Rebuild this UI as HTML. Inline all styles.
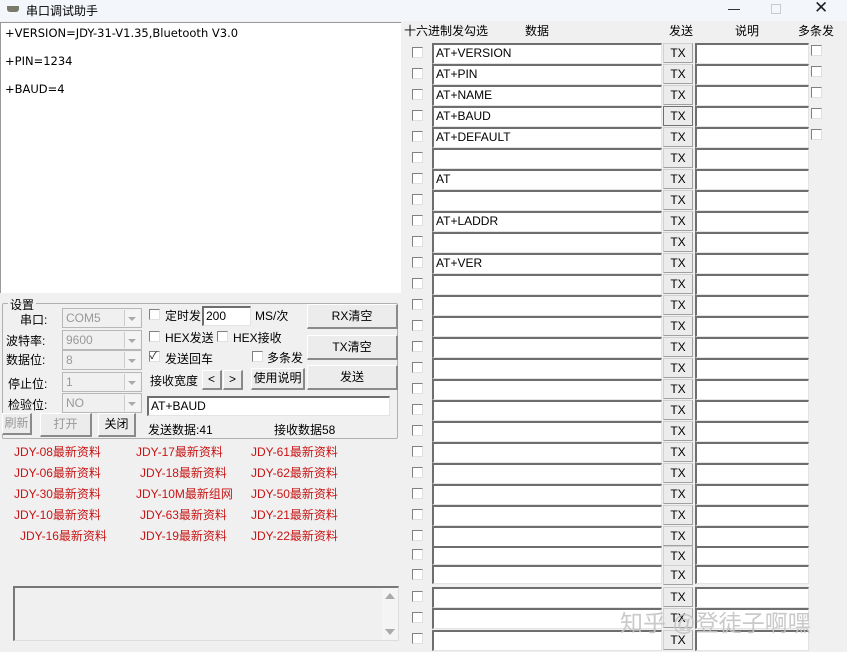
<!DOCTYPE html>
<html><head><meta charset="utf-8"><style>
*{box-sizing:border-box;margin:0;padding:0}
body{width:847px;height:652px;background:#f0f0f0;font-family:"Liberation Sans","Noto Sans CJK SC",sans-serif;font-size:12px;color:#000;position:relative;overflow:hidden}
.a{position:absolute;white-space:nowrap}
.title{left:0;top:0;width:847px;height:21px;background:#f3f6fa}
.inp{position:absolute;background:#fff;border-top:2px solid #6e6e6e;border-left:2px solid #6e6e6e;border-bottom:1px solid #e3e3e3;border-right:1px solid #e3e3e3;font-size:12px;padding-left:2px;line-height:17px;white-space:nowrap}
.tx{position:absolute;background:#ececec;border:1px solid #d0d0d0;border-right:1px solid #a0a0a0;border-bottom:1px solid #a0a0a0;text-align:center;font-size:12px;line-height:18px;width:30px;height:20px}
.cb{position:absolute;width:11px;height:11px;background:#fff;border-top:1px solid #808080;border-left:1px solid #808080;border-right:1px solid #e0e0e0;border-bottom:1px solid #e0e0e0}
.btn{position:absolute;background:#ececec;border:1px solid #fff;border-right:2px solid #8a8a8a;border-bottom:2px solid #8a8a8a;text-align:center;font-size:12px}
.sel{position:absolute;background:#f0f0f0;border:1px solid #b8b8b8;color:#999;font-size:12px;padding-left:3px;line-height:18px;height:20px;width:80px}
.sel:after{content:"";position:absolute;right:1px;top:1px;width:15px;height:16px;background:#f4f4f4;border-left:1px solid #ccc}
.sel i{position:absolute;right:5px;top:8px;border:4px solid transparent;border-top:4px solid #aaa;z-index:2}
.red{position:absolute;color:#c81414;font-size:12px;white-space:nowrap}
</style></head><body>
<div class="a title"></div>
<div class="a" style="left:7px;top:6px;width:12px;height:6px;background:#7a7a6a;border-radius:0 0 3px 3px"></div>
<div class="a" style="left:26px;top:2px;font-size:12px">串口调试助手</div>
<div class="a" style="left:728px;top:9px;width:12px;height:1px;background:#333"></div>
<div class="a" style="left:771px;top:4px;width:10px;height:10px;border:1px solid #ccc"></div>
<div class="a" style="left:814px;top:-2px;font-size:17px;color:#222">✕</div>

<div class="a" style="left:0;top:22px;width:401px;height:271px;background:#fff;border-top:1px solid #999;border-left:1px solid #999"></div>
<div class="a" style="left:5px;top:26px;font-family:'DejaVu Sans',sans-serif;font-size:11.5px">+VERSION=JDY-31-V1.35,Bluetooth V3.0</div>
<div class="a" style="left:5px;top:54px;font-family:'DejaVu Sans',sans-serif;font-size:11.5px">+PIN=1234</div>
<div class="a" style="left:5px;top:82px;font-family:'DejaVu Sans',sans-serif;font-size:11.5px">+BAUD=4</div>

<div class="a" style="left:2px;top:303px;width:396px;height:136px;border:1px solid #b0b0b0;border-radius:2px"></div>
<div class="a" style="left:8px;top:296px;background:#f0f0f0;padding:0 2px">设置</div>
<div class="a" style="left:20px;top:311px">串口:</div>
<div class="a" style="left:6px;top:332px">波特率:</div>
<div class="a" style="left:6px;top:351px">数据位:</div>
<div class="a" style="left:8px;top:375px">停止位:</div>
<div class="a" style="left:8px;top:396px">检验位:</div>
<div class="sel" style="left:62px;top:308px">COM5<i></i></div>
<div class="sel" style="left:62px;top:330px">9600<i></i></div>
<div class="sel" style="left:62px;top:350px">8<i></i></div>
<div class="sel" style="left:62px;top:372px">1<i></i></div>
<div class="sel" style="left:62px;top:393px">NO<i></i></div>
<div class="btn" style="left:2px;top:413px;width:30px;height:22px;color:#999;line-height:19px">刷新</div>
<div class="btn" style="left:40px;top:413px;width:52px;height:24px;color:#999;line-height:21px">打开</div>
<div class="btn" style="left:98px;top:413px;width:38px;height:24px;line-height:21px">关闭</div>

<div class="cb" style="left:149px;top:309px"></div><div class="a" style="left:165px;top:307px">定时发</div>
<div class="inp" style="left:202px;top:306px;width:49px;height:20px">200</div>
<div class="a" style="left:255px;top:307px">MS/次</div>
<div class="cb" style="left:149px;top:331px"></div><div class="a" style="left:165px;top:329px">HEX发送</div>
<div class="cb" style="left:217px;top:331px"></div><div class="a" style="left:233px;top:329px">HEX接收</div>
<div class="cb" style="left:149px;top:351px;font-size:10px;line-height:9px">✓</div><div class="a" style="left:165px;top:350px">发送回车</div>
<div class="cb" style="left:252px;top:351px"></div><div class="a" style="left:267px;top:349px">多条发</div>
<div class="a" style="left:150px;top:372px">接收宽度</div>
<div class="btn" style="left:202px;top:370px;width:20px;height:20px;line-height:17px">&lt;</div>
<div class="btn" style="left:223px;top:370px;width:20px;height:20px;line-height:17px">&gt;</div>
<div class="btn" style="left:251px;top:368px;width:54px;height:22px;line-height:19px">使用说明</div>
<div class="btn" style="left:307px;top:304px;width:91px;height:25px;line-height:22px">RX清空</div>
<div class="btn" style="left:307px;top:335px;width:91px;height:25px;line-height:22px">TX清空</div>
<div class="btn" style="left:307px;top:365px;width:91px;height:25px;line-height:22px">发送</div>
<div class="inp" style="left:147px;top:396px;width:243px;height:20px">AT+BAUD</div>
<div class="a" style="left:148px;top:421px">发送数据:41</div>
<div class="a" style="left:274px;top:421px">接收数据58</div>

<div class="red" style="left:14px;top:443px">JDY-08最新资料</div>
<div class="red" style="left:136px;top:443px">JDY-17最新资料</div>
<div class="red" style="left:251px;top:443px">JDY-61最新资料</div>
<div class="red" style="left:14px;top:464px">JDY-06最新资料</div>
<div class="red" style="left:140px;top:464px">JDY-18最新资料</div>
<div class="red" style="left:251px;top:464px">JDY-62最新资料</div>
<div class="red" style="left:14px;top:485px">JDY-30最新资料</div>
<div class="red" style="left:136px;top:485px">JDY-10M最新组网</div>
<div class="red" style="left:251px;top:485px">JDY-50最新资料</div>
<div class="red" style="left:14px;top:506px">JDY-10最新资料</div>
<div class="red" style="left:140px;top:506px">JDY-63最新资料</div>
<div class="red" style="left:251px;top:506px">JDY-21最新资料</div>
<div class="red" style="left:20px;top:527px">JDY-16最新资料</div>
<div class="red" style="left:140px;top:527px">JDY-19最新资料</div>
<div class="red" style="left:251px;top:527px">JDY-22最新资料</div>

<div class="a" style="left:13px;top:586px;width:386px;height:55px;background:#f0f0f0;border-top:2px solid #777;border-left:2px solid #777;border-right:1px solid #ddd;border-bottom:1px solid #ddd"></div>
<div class="a" style="left:382px;top:588px;width:16px;height:52px;background:#f4f4f4"></div>
<div class="a" style="left:385px;top:593px;border:5px solid transparent;border-bottom:6px solid #aaa;border-top:0"></div>
<div class="a" style="left:385px;top:629px;border:5px solid transparent;border-top:6px solid #aaa;border-bottom:0"></div>

<div class="a" style="left:404px;top:22px">十六进制发勾选</div>
<div class="a" style="left:525px;top:22px">数据</div>
<div class="a" style="left:669px;top:22px">发送</div>
<div class="a" style="left:735px;top:22px">说明</div>
<div class="a" style="left:798px;top:22px">多条发</div>

<div class="cb" style="left:811px;top:45px"></div>
<div class="cb" style="left:811px;top:66px"></div>
<div class="cb" style="left:811px;top:87px"></div>
<div class="cb" style="left:811px;top:108px"></div>
<div class="cb" style="left:811px;top:129px"></div>

<div class="cb" style="left:412px;top:47px"></div><div class="inp" style="left:432px;top:43px;width:230px;height:21px">AT+VERSION</div><div class="tx" style="left:663px;top:43px">TX</div><div class="inp" style="left:695px;top:43px;width:114px;height:21px"></div>
<div class="cb" style="left:412px;top:68px"></div><div class="inp" style="left:432px;top:64px;width:230px;height:21px">AT+PIN</div><div class="tx" style="left:663px;top:64px">TX</div><div class="inp" style="left:695px;top:64px;width:114px;height:21px"></div>
<div class="cb" style="left:412px;top:89px"></div><div class="inp" style="left:432px;top:85px;width:230px;height:21px">AT+NAME</div><div class="tx" style="left:663px;top:85px">TX</div><div class="inp" style="left:695px;top:85px;width:114px;height:21px"></div>
<div class="cb" style="left:412px;top:110px"></div><div class="inp" style="left:432px;top:106px;width:230px;height:21px">AT+BAUD</div><div class="tx" style="left:663px;top:106px;border:1px solid #707070">TX</div><div class="inp" style="left:695px;top:106px;width:114px;height:21px"></div>
<div class="cb" style="left:412px;top:131px"></div><div class="inp" style="left:432px;top:127px;width:230px;height:21px">AT+DEFAULT</div><div class="tx" style="left:663px;top:127px">TX</div><div class="inp" style="left:695px;top:127px;width:114px;height:21px"></div>
<div class="cb" style="left:412px;top:152px"></div><div class="inp" style="left:432px;top:148px;width:230px;height:21px"></div><div class="tx" style="left:663px;top:148px">TX</div><div class="inp" style="left:695px;top:148px;width:114px;height:21px"></div>
<div class="cb" style="left:412px;top:173px"></div><div class="inp" style="left:432px;top:169px;width:230px;height:21px">AT</div><div class="tx" style="left:663px;top:169px">TX</div><div class="inp" style="left:695px;top:169px;width:114px;height:21px"></div>
<div class="cb" style="left:412px;top:194px"></div><div class="inp" style="left:432px;top:190px;width:230px;height:21px"></div><div class="tx" style="left:663px;top:190px">TX</div><div class="inp" style="left:695px;top:190px;width:114px;height:21px"></div>
<div class="cb" style="left:412px;top:215px"></div><div class="inp" style="left:432px;top:211px;width:230px;height:21px">AT+LADDR</div><div class="tx" style="left:663px;top:211px">TX</div><div class="inp" style="left:695px;top:211px;width:114px;height:21px"></div>
<div class="cb" style="left:412px;top:236px"></div><div class="inp" style="left:432px;top:232px;width:230px;height:21px"></div><div class="tx" style="left:663px;top:232px">TX</div><div class="inp" style="left:695px;top:232px;width:114px;height:21px"></div>
<div class="cb" style="left:412px;top:257px"></div><div class="inp" style="left:432px;top:253px;width:230px;height:21px">AT+VER</div><div class="tx" style="left:663px;top:253px">TX</div><div class="inp" style="left:695px;top:253px;width:114px;height:21px"></div>
<div class="cb" style="left:412px;top:278px"></div><div class="inp" style="left:432px;top:274px;width:230px;height:21px"></div><div class="tx" style="left:663px;top:274px">TX</div><div class="inp" style="left:695px;top:274px;width:114px;height:21px"></div>
<div class="cb" style="left:412px;top:299px"></div><div class="inp" style="left:432px;top:295px;width:230px;height:21px"></div><div class="tx" style="left:663px;top:295px">TX</div><div class="inp" style="left:695px;top:295px;width:114px;height:21px"></div>
<div class="cb" style="left:412px;top:320px"></div><div class="inp" style="left:432px;top:316px;width:230px;height:21px"></div><div class="tx" style="left:663px;top:316px">TX</div><div class="inp" style="left:695px;top:316px;width:114px;height:21px"></div>
<div class="cb" style="left:412px;top:341px"></div><div class="inp" style="left:432px;top:337px;width:230px;height:21px"></div><div class="tx" style="left:663px;top:337px">TX</div><div class="inp" style="left:695px;top:337px;width:114px;height:21px"></div>
<div class="cb" style="left:412px;top:362px"></div><div class="inp" style="left:432px;top:358px;width:230px;height:21px"></div><div class="tx" style="left:663px;top:358px">TX</div><div class="inp" style="left:695px;top:358px;width:114px;height:21px"></div>
<div class="cb" style="left:412px;top:383px"></div><div class="inp" style="left:432px;top:379px;width:230px;height:21px"></div><div class="tx" style="left:663px;top:379px">TX</div><div class="inp" style="left:695px;top:379px;width:114px;height:21px"></div>
<div class="cb" style="left:412px;top:404px"></div><div class="inp" style="left:432px;top:400px;width:230px;height:21px"></div><div class="tx" style="left:663px;top:400px">TX</div><div class="inp" style="left:695px;top:400px;width:114px;height:21px"></div>
<div class="cb" style="left:412px;top:425px"></div><div class="inp" style="left:432px;top:421px;width:230px;height:21px"></div><div class="tx" style="left:663px;top:421px">TX</div><div class="inp" style="left:695px;top:421px;width:114px;height:21px"></div>
<div class="cb" style="left:412px;top:446px"></div><div class="inp" style="left:432px;top:442px;width:230px;height:21px"></div><div class="tx" style="left:663px;top:442px">TX</div><div class="inp" style="left:695px;top:442px;width:114px;height:21px"></div>
<div class="cb" style="left:412px;top:467px"></div><div class="inp" style="left:432px;top:463px;width:230px;height:21px"></div><div class="tx" style="left:663px;top:463px">TX</div><div class="inp" style="left:695px;top:463px;width:114px;height:21px"></div>
<div class="cb" style="left:412px;top:488px"></div><div class="inp" style="left:432px;top:484px;width:230px;height:21px"></div><div class="tx" style="left:663px;top:484px">TX</div><div class="inp" style="left:695px;top:484px;width:114px;height:21px"></div>
<div class="cb" style="left:412px;top:509px"></div><div class="inp" style="left:432px;top:505px;width:230px;height:21px"></div><div class="tx" style="left:663px;top:505px">TX</div><div class="inp" style="left:695px;top:505px;width:114px;height:21px"></div>
<div class="cb" style="left:412px;top:530px"></div><div class="inp" style="left:432px;top:526px;width:230px;height:21px"></div><div class="tx" style="left:663px;top:526px">TX</div><div class="inp" style="left:695px;top:526px;width:114px;height:21px"></div>
<div class="cb" style="left:412px;top:549px"></div><div class="inp" style="left:432px;top:546px;width:230px;height:19px"></div><div class="tx" style="left:663px;top:546px">TX</div><div class="inp" style="left:695px;top:546px;width:114px;height:19px"></div>
<div class="cb" style="left:412px;top:569px"></div><div class="inp" style="left:432px;top:565px;width:230px;height:19px"></div><div class="tx" style="left:663px;top:565px">TX</div><div class="inp" style="left:695px;top:565px;width:114px;height:19px"></div>
<div class="cb" style="left:412px;top:591px"></div><div class="inp" style="left:432px;top:587px;width:230px;height:21px"></div><div class="tx" style="left:663px;top:587px">TX</div><div class="inp" style="left:695px;top:587px;width:114px;height:21px"></div>
<div class="cb" style="left:412px;top:612px"></div><div class="inp" style="left:432px;top:608px;width:230px;height:21px"></div><div class="tx" style="left:663px;top:608px">TX</div><div class="inp" style="left:695px;top:608px;width:114px;height:21px"></div>
<div class="cb" style="left:412px;top:633px"></div><div class="inp" style="left:432px;top:630px;width:230px;height:21px"></div><div class="tx" style="left:663px;top:630px">TX</div><div class="inp" style="left:695px;top:630px;width:114px;height:21px"></div>

<div class="a" style="left:620px;top:604px;font-size:23px;color:rgba(195,195,195,0.9)">知乎 @登徒子啊嘿</div>
</body></html>
